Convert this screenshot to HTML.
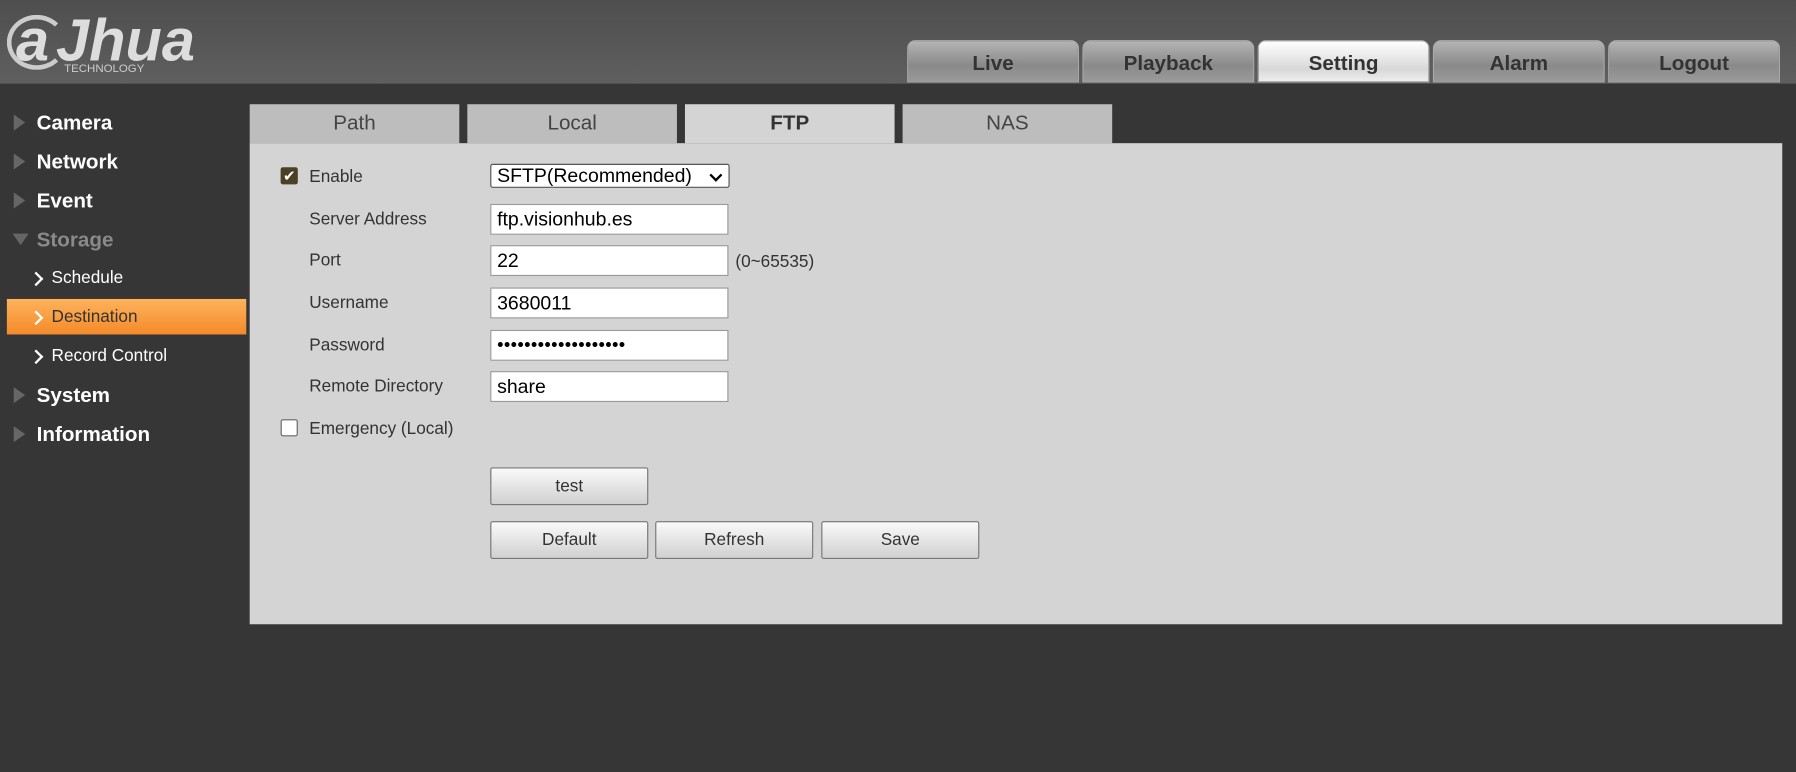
<!DOCTYPE html>
<html><head><meta charset="utf-8"><style>
html,body{margin:0;padding:0;width:1796px;height:772px;overflow:hidden;background:#363636;font-family:"Liberation Sans",sans-serif}
#w{position:absolute;left:0;top:0;width:1568px;height:674px;transform:scale(1.14541);transform-origin:0 0;background:#363636}
.a{position:absolute}
#hd{left:0;top:0;width:1568px;height:73px;background:linear-gradient(#4e4e4e,#5f5f5f)}
.tt{top:35px;height:37px;width:150px;border-radius:7px 7px 0 0;background:linear-gradient(#b4b4b4,#8a8a8a 60%,#9a9a9a);border:1px solid #aaa;box-sizing:border-box;text-align:center;line-height:38px;font-weight:bold;font-size:18px;color:#333}
.tt.on{background:linear-gradient(#fff,#d8d8d8 70%,#eee)}
.nav{left:32px;font-size:18px;font-weight:bold;color:#fff}
.tri{left:12px;width:0;height:0;border-left:10px solid #666;border-top:7px solid transparent;border-bottom:7px solid transparent}
.sub{left:45px;font-size:15px;color:#fff}
.chev{left:27px;top:0;width:7px;height:7px;border-right:2px solid #fff;border-top:2px solid #fff;transform:rotate(45deg)}
.st{top:91px;height:34px;width:183px;background:#bdbdbd;text-align:center;line-height:32px;font-size:18px;color:#444}
.lb{left:270px;font-size:15px;color:#333}
.in{left:428px;width:208px;height:27px;background:#fff;border:1px solid #999;box-sizing:border-box;font-size:17px;line-height:25px;padding-left:5px;color:#000}
.bt{width:138px;height:33px;border:1px solid #777;box-sizing:border-box;border-radius:2px;background:linear-gradient(#fafafa,#d0d0d0);text-align:center;line-height:31px;font-size:15px;color:#333}
</style></head><body><div id="w">
<div class="a" id="hd"></div>
<div class="a" style="left:6px;top:13px;width:52px;height:48px;border:4px solid #ccc;border-radius:50%;border-right-color:transparent;box-sizing:border-box"></div>
<div class="a" style="left:14px;top:6px;font-size:52px;font-weight:bold;font-style:italic;color:#ddd">a<span style="margin-left:6px">Jhua</span></div>
<div class="a" style="left:56px;top:55px;font-size:10px;color:#ccc">TECHNOLOGY</div>
<div class="a tt" style="left:792px">Live</div>
<div class="a tt" style="left:945px">Playback</div>
<div class="a tt on" style="left:1098px">Setting</div>
<div class="a tt" style="left:1251px">Alarm</div>
<div class="a tt" style="left:1404px">Logout</div>

<div class="a tri" style="top:100px"></div><div class="a nav" style="top:97px">Camera</div>
<div class="a tri" style="top:134px"></div><div class="a nav" style="top:131px">Network</div>
<div class="a tri" style="top:168px"></div><div class="a nav" style="top:165px">Event</div>
<div class="a" style="left:11px;top:204px;border-top:10px solid #666;border-left:7px solid transparent;border-right:7px solid transparent"></div><div class="a nav" style="top:199px;color:#8a8a8a">Storage</div>
<div class="a chev" style="top:239px"></div><div class="a sub" style="top:234px">Schedule</div>
<div class="a" style="left:6px;top:261px;width:209px;height:31px;background:linear-gradient(#fdb35c,#f48a2a)"></div>
<div class="a chev" style="top:273px"></div><div class="a sub" style="top:268px;color:#333">Destination</div>
<div class="a chev" style="top:307px"></div><div class="a sub" style="top:302px">Record Control</div>
<div class="a tri" style="top:338px"></div><div class="a nav" style="top:335px">System</div>
<div class="a tri" style="top:372px"></div><div class="a nav" style="top:369px">Information</div>

<div class="a st" style="left:218px">Path</div>
<div class="a st" style="left:408px">Local</div>
<div class="a st" style="left:598px;background:#d4d4d4;font-weight:bold;color:#333">FTP</div>
<div class="a st" style="left:788px">NAS</div>
<div class="a" style="left:218px;top:125px;width:1338px;height:420px;background:#d4d4d4"></div>

<div class="a" style="left:245px;top:146px;width:15px;height:15px;background:#4b3f26;border-radius:2px;color:#fff;font-size:13px;line-height:15px;text-align:center">✔</div>
<div class="a lb" style="top:146px">Enable</div>
<div class="a in" style="top:143px;height:21px;line-height:19px;width:209px;border-radius:2px;border-color:#555">SFTP(Recommended)<span style="position:absolute;right:7px;top:5px;width:6px;height:6px;border-right:2px solid #000;border-bottom:2px solid #000;transform:rotate(45deg)"></span></div>
<div class="a lb" style="top:183px">Server Address</div><div class="a in" style="top:178px">ftp.visionhub.es</div>
<div class="a lb" style="top:219px">Port</div><div class="a in" style="top:214px">22</div>
<div class="a" style="left:642px;top:220px;font-size:15px;color:#333">(0~65535)</div>
<div class="a lb" style="top:256px">Username</div><div class="a in" style="top:251px">3680011</div>
<div class="a lb" style="top:293px">Password</div><div class="a in" style="top:288px;font-size:16px;letter-spacing:0.3px">•••••••••••••••••••</div>
<div class="a lb" style="top:329px">Remote Directory</div><div class="a in" style="top:324px">share</div>
<div class="a" style="left:245px;top:366px;width:15px;height:15px;background:#fff;border:1px solid #666;box-sizing:border-box;border-radius:2px"></div>
<div class="a lb" style="top:366px">Emergency (Local)</div>

<div class="a bt" style="left:428px;top:408px">test</div>
<div class="a bt" style="left:428px;top:455px">Default</div>
<div class="a bt" style="left:572px;top:455px">Refresh</div>
<div class="a bt" style="left:717px;top:455px">Save</div>
</div></body></html>
